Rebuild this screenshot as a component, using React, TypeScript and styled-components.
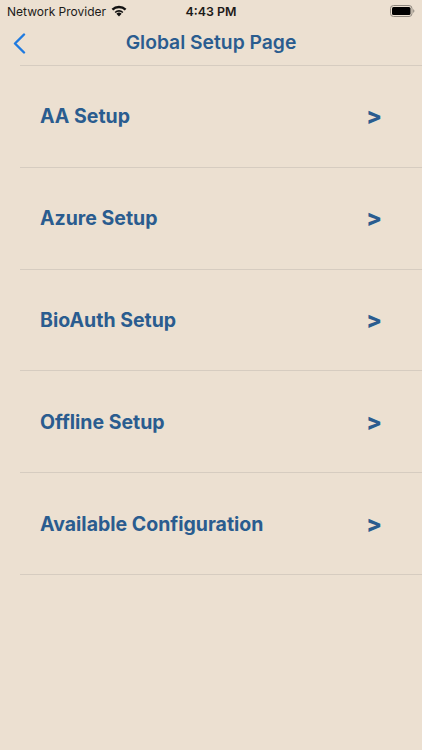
import React from 'react';
import styled, { createGlobalStyle } from 'styled-components';

const GlobalStyle = createGlobalStyle`
  html, body {
    margin: 0;
    padding: 0;
    background: #ece0d1;
  }
  * {
    box-sizing: border-box;
  }
`;

const Screen = styled.div`
  width: 422px;
  height: 750px;
  overflow: hidden;
  background: #ece0d1;
  font-family: Inter, "Liberation Sans", sans-serif;
`;

const StatusBar = styled.div`
  height: 22px;
  display: grid;
  grid-template-columns: 1fr auto 1fr;
  align-items: center;
  padding: 0 7px;
  color: #1c1a18;
`;

const Carrier = styled.div`
  display: flex;
  align-items: center;
  gap: 5px;
  font-size: 12px;
`;

const Clock = styled.div`
  font-size: 12.4px;
  font-weight: 600;
`;

const Battery = styled.div`
  justify-self: end;
  display: flex;
  align-items: center;
`;

const NavBar = styled.div`
  height: 43px;
  display: flex;
  align-items: center;
  justify-content: center;
  padding-bottom: 3px;
  position: relative;
`;

const BackButton = styled.button`
  position: absolute;
  left: 13px;
  top: 11px;
  padding: 0;
  border: 0;
  background: none;
  display: flex;
`;

const Title = styled.h1`
  margin: 0;
  font-size: 19.3px;
  font-weight: 600;
  color: #2a5c8f;
`;

const List = styled.div`
  margin-left: 20px;
  border-top: 1px solid #d6ccc0;
`;

const Row = styled.div`
  height: 101.8px;
  display: flex;
  align-items: center;
  justify-content: space-between;
  padding: 0 40px 0 20px;
  border-bottom: 1px solid #d6ccc0;
`;

const Label = styled.span`
  font-size: 19.5px;
  font-weight: 700;
  color: #2a5c8f;
`;

const Chevron = styled.span`
  font-size: 23px;
  font-weight: 800;
  color: #2a5c8f;
`;

const rows = [
  'AA Setup',
  'Azure Setup',
  'BioAuth Setup',
  'Offline Setup',
  'Available Configuration',
];

export default function App() {
  return (
    <Screen>
      <GlobalStyle />
      <StatusBar>
        <Carrier>
          Network Provider
          <svg width="16" height="12" viewBox="0 0 16 12">
            <path d="M8 11.5 5.4 8.8a3.7 3.7 0 0 1 5.2 0L8 11.5Z" fill="#111" />
            <path d="M3.6 6.9a6.3 6.3 0 0 1 8.8 0l-1.1 1.2a4.7 4.7 0 0 0-6.6 0L3.6 6.9Z" fill="#111" />
            <path d="M0.6 3.8a10.6 10.6 0 0 1 14.8 0l-1.6 1.8a8.2 8.2 0 0 0-11.6 0L0.6 3.8Z" fill="#111" />
          </svg>
        </Carrier>
        <Clock>4:43 PM</Clock>
        <Battery>
          <svg width="25" height="12" viewBox="0 0 25 12">
            <rect x="0.5" y="0.5" width="21.5" height="11" rx="3" fill="none" stroke="#8f887f" />
            <rect x="2" y="2" width="18.5" height="8" rx="1.5" fill="#000" />
            <path d="M23.2 4.3c.8.3 1.2 1 1.2 1.7s-.4 1.4-1.2 1.7V4.3Z" fill="#8f887f" />
          </svg>
        </Battery>
      </StatusBar>
      <NavBar>
        <BackButton aria-label="Back">
          <svg width="13" height="21" viewBox="0 0 13 21">
            <path d="M11 1.5 2 10.5l9 9" fill="none" stroke="#1f7ae0" strokeWidth="2.4" strokeLinecap="round" strokeLinejoin="round" />
          </svg>
        </BackButton>
        <Title>Global Setup Page</Title>
      </NavBar>
      <List>
        {rows.map((label) => (
          <Row key={label}>
            <Label>{label}</Label>
            <Chevron>&gt;</Chevron>
          </Row>
        ))}
      </List>
    </Screen>
  );
}
